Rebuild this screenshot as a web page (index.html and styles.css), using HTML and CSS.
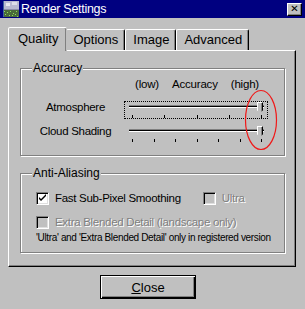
FILE: index.html
```html
<html>
<head>
    <meta charset="UTF-8">
    <meta name="viewport" content="width=device-width, initial-scale=1.0">
    <title>Render Settings</title>
    <link rel="stylesheet" href="styles.css">
</head>
<body>

<div class="window">
    <div class="titlebar">
        <svg class="app-icon" width="16" height="16" viewBox="0 0 16 16">
            <rect x="0" y="0" width="16" height="16" fill="#8c8ca8"/>
            <rect x="0" y="0" width="16" height="8" fill="#b8b8d0"/>
            <rect x="3" y="2" width="4" height="3" fill="#e8e8f0"/>
            <rect x="9" y="1" width="5" height="3" fill="#dcdce8"/>
            <rect x="0" y="9" width="16" height="7" fill="#4a6a3a"/>
            <path d="M1 10h1v1H1zM4 11h1v1H4zM7 10h1v1H7zM10 12h1v1h-1zM13 10h1v1h-1zM2 13h1v1H2zM6 14h1v1H6zM9 14h1v1H9zM12 13h1v1h-1zM14 15h1v1h-1z" fill="#8fe05a"/>
            <rect x="0" y="0" width="1" height="16" fill="#4060a0"/>
        </svg>
        <span class="title">Render Settings</span>
        <button class="title-close">&#x2715;</button>
    </div>

    <div class="tabs">
        <div class="tab active">Quality</div>
        <div class="tab">Options</div>
        <div class="tab">Image</div>
        <div class="tab">Advanced</div>
    </div>

    <div class="panel">
        <fieldset class="group accuracy">
            <legend>Accuracy</legend>
            <div class="scale-head">
                <span>(low)</span>
                <span>Accuracy</span>
                <span>(high)</span>
            </div>
            <div class="row">
                <span class="row-label">Atmosphere</span>
                <div class="slider focused">
                    <div class="track"></div>
                    <div class="thumb"></div>
                    <div class="ticks">
                        <i></i><i></i><i></i><i></i><i></i>
                    </div>
                </div>
            </div>
            <div class="row">
                <span class="row-label">Cloud Shading</span>
                <div class="slider">
                    <div class="track"></div>
                    <div class="thumb"></div>
                    <div class="ticks">
                        <i></i><i></i><i></i><i></i><i></i><i></i><i></i>
                    </div>
                </div>
            </div>
            <svg class="mark" width="36" height="64" viewBox="0 0 36 64">
                <ellipse cx="18" cy="32" rx="15.5" ry="29.5" fill="none" stroke="#f01818" stroke-width="1.2"/>
            </svg>
        </fieldset>

        <fieldset class="group aliasing">
            <legend>Anti-Aliasing</legend>
            <div class="check-row">
                <label class="check"><span class="box checked">
                    <svg width="9" height="9" viewBox="0 0 9 9"><path d="M1 3l2 2 5-5v2l-5 5-2-2z" fill="#000"/></svg>
                </span>Fast Sub-Pixel Smoothing</label>
                <label class="check disabled"><span class="box"></span>Ultra</label>
            </div>
            <div class="check-row">
                <label class="check disabled"><span class="box"></span>Extra Blended Detail (landscape only)</label>
            </div>
            <p class="note">'Ultra' and 'Extra Blended Detail' only in registered version</p>
        </fieldset>
    </div>

    <div class="footer">
        <button class="btn default"><u>C</u>lose</button>
    </div>
</div>

</body>
</html>
```

FILE: styles.css
```css
* {
    margin: 0;
    padding: 0;
    box-sizing: border-box;
}
body {
    font-family: "Liberation Sans", Arial, sans-serif;
    font-size: 11px;
    background-color: #c0c0c0;
    color: #000;
}
.window {
    width: 305px;
    height: 309px;
    background: #c0c0c0;
    overflow: hidden;
}
.titlebar {
    height: 18px;
    background: #000080;
    color: white;
    display: flex;
    align-items: center;
    padding: 0 3px 0 3px;
}
.app-icon {
    margin-right: 2px;
}
.title {
    font-size: 12.5px;
    letter-spacing: -0.3px;
}
.title-close {
    margin-left: auto;
    width: 15px;
    height: 13px;
    background: #c0c0c0;
    border: 1px solid;
    border-color: #fff #000 #000 #fff;
    box-shadow: inset -1px -1px 0 #808080;
    font-size: 10px;
    font-weight: bold;
    line-height: 10px;
    color: #000;
    font-family: "DejaVu Sans", sans-serif;
}
.tabs {
    display: flex;
    align-items: flex-end;
    height: 32px;
    padding-left: 8px;
}
.tab {
    height: 21px;
    padding: 0 6px 0 7px;
    font-size: 13px;
    line-height: 20px;
    border: 1px solid;
    border-color: #fff #000 transparent #fff;
    border-bottom: none;
    border-radius: 2px 2px 0 0;
    box-shadow: inset -1px 0 0 #808080;
    position: relative;
}
.tab.active {
    height: 24px;
    padding: 0 8px 0 9px;
    line-height: 22px;
    top: 1px;
    border-right-color: transparent;
    z-index: 1;
    background: #c0c0c0;
    margin-right: -1px;
}
.tab.active + .tab {
    border-left: none;
}
.panel {
    margin: 0 9px 0 8px;
    height: 217px;
    border: 1px solid;
    border-color: #fff #000 #000 #fff;
    box-shadow: inset -1px -1px 0 #808080;
    padding: 11px 10px 0 11px;
}
.group {
    position: relative;
    border: 1px solid #808080;
    box-shadow: inset 1px 1px 0 #fff, 1px 1px 0 #fff;
    padding: 0 6px;
}
.group legend {
    margin-left: 5px;
    padding: 0 1px;
    background: #c0c0c0;
    font-size: 12px;
    line-height: 13px;
}
.accuracy {
    height: 94px;
}
.aliasing {
    margin-top: 11px;
    height: 86px;
}
.scale-head {
    display: flex;
    justify-content: space-between;
    margin: 2px 19px 0 108px;
    height: 24px;
    font-size: 11.5px;
    line-height: 14px;
    letter-spacing: -0.2px;
}
.row {
    display: flex;
    align-items: flex-start;
    height: 24px;
}
.row-label {
    width: 97px;
    text-align: center;
    padding-top: 0;
    line-height: 13px;
    font-size: 11.5px;
    letter-spacing: -0.3px;
}
.slider {
    position: relative;
    width: 144px;
    height: 18px;
    border: 1px dotted transparent;
}
.slider.focused {
    border-color: #000;
}
.track {
    position: absolute;
    left: 4px;
    right: 3px;
    top: 3px;
    height: 3px;
    border-top: 1px solid #808080;
    border-bottom: 1px solid #fff;
    background: #000;
}
.thumb {
    position: absolute;
    right: 4px;
    top: 0;
    width: 6px;
    height: 11px;
    background: #c0c0c0;
    border: 1px solid;
    border-color: #fff #000 transparent #fff;
    clip-path: polygon(0 0, 100% 0, 100% 75%, 50% 100%, 0 75%);
    box-shadow: inset -1px 0 0 #808080;
}
.ticks {
    position: absolute;
    left: 7px;
    right: 5px;
    top: 13px;
    display: flex;
    justify-content: space-between;
}
.ticks i {
    display: block;
    width: 1px;
    height: 3px;
    background: #000;
}
.mark {
    position: absolute;
    left: 222px;
    top: 13px;
}
.check-row {
    display: flex;
    align-items: center;
    gap: 22px;
    height: 24px;
    margin-left: 9px;
}
.check-row:first-of-type {
    margin-top: 6px;
}
.check {
    display: flex;
    align-items: center;
    font-size: 11.5px;
    letter-spacing: -0.3px;
}
.box {
    display: inline-flex;
    align-items: center;
    justify-content: center;
    width: 13px;
    height: 13px;
    margin-right: 6px;
    background: #fff;
    border: 1px solid;
    border-color: #808080 #fff #fff #808080;
    box-shadow: inset 1px 1px 0 #000, inset -1px -1px 0 #dfdfdf;
}
.check.disabled {
    color: #808080;
    text-shadow: 1px 1px 0 #fff;
}
.check.disabled .box {
    background: #c0c0c0;
}
.note {
    margin: -3px 0 0 9px;
    font-size: 10px;
    line-height: 14px;
    white-space: nowrap;
    letter-spacing: -0.35px;
}
.footer {
    display: flex;
    justify-content: center;
    padding-top: 8px;
    padding-right: 9px;
}
.btn {
    width: 96px;
    height: 24px;
    background: #c0c0c0;
    font-family: inherit;
    font-size: 13px;
    border: 1px solid #000;
    box-shadow: inset 1px 1px 0 #fff, inset -1px -1px 0 #000, inset -2px -2px 0 #808080;
}
```
